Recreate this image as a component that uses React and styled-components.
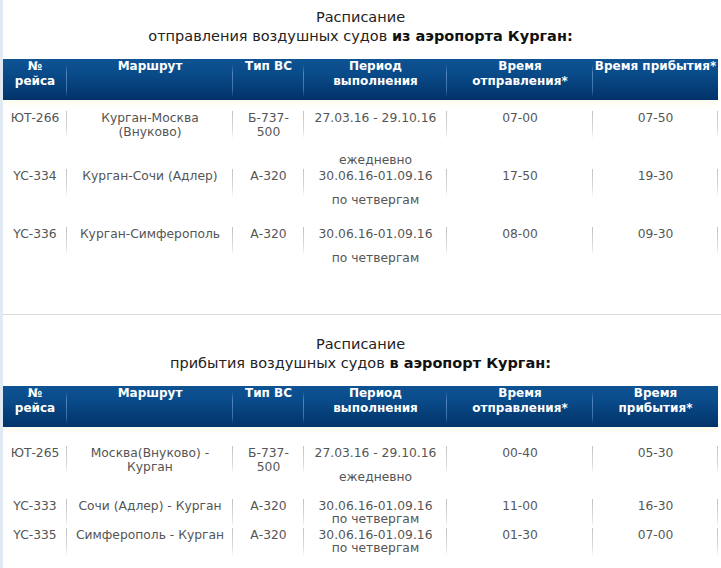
import React from 'react'
import styled, { createGlobalStyle } from 'styled-components'

const COLS = '64px 166px 71px 143px 146px 125px'

const departures = {
  lead: 'отправления воздушных судов',
  strong: 'из аэропорта Курган:',
  head: [['№', 'рейса'], ['Маршрут'], ['Тип ВС'], ['Период', 'выполнения'], ['Время', 'отправления*'], ['Время прибытия*']],
  top: 10,
  rows: [
    { height: 58, gap: 28, cells: ['ЮТ-266', ['Курган-Москва', '(Внуково)'], ['Б-737-', '500'], '27.03.16 - 29.10.16', 'ежедневно', '07-00', '07-50'] },
    { height: 58, gap: 10, cells: ['YC-334', 'Курган-Сочи (Адлер)', 'А-320', '30.06.16-01.09.16', 'по четвергам', '17-50', '19-30'] },
    { height: 58, gap: 10, cells: ['YC-336', 'Курган-Симферополь', 'А-320', '30.06.16-01.09.16', 'по четвергам', '08-00', '09-30'] }
  ]
}

const arrivals = {
  lead: 'прибытия воздушных судов',
  strong: 'в аэропорт Курган:',
  head: [['№', 'рейса'], ['Маршрут'], ['Тип ВС'], ['Период', 'выполнения'], ['Время', 'отправления*'], ['Время', 'прибытия*']],
  top: 18,
  rows: [
    { height: 53, gap: 10, cells: ['ЮТ-265', ['Москва(Внуково) -', 'Курган'], ['Б-737-', '500'], '27.03.16 - 29.10.16', 'ежедневно', '00-40', '05-30'] },
    { height: 29, gap: -1, cells: ['YC-333', 'Сочи (Адлер) - Курган', 'А-320', '30.06.16-01.09.16', 'по четвергам', '11-00', '16-30'] },
    { height: 29, gap: -1, cells: ['YC-335', 'Симферополь - Курган', 'А-320', '30.06.16-01.09.16', 'по четвергам', '01-30', '07-00'] }
  ]
}

const lines = (v) => (Array.isArray(v) ? v : [v]).map((t, i) => <Line key={i}>{t}</Line>)

const Schedule = ({ data, first }) => (
  <Section $first={first}>
    <Title>
      <div>Расписание</div>
      <div>{data.lead} <b>{data.strong}</b></div>
    </Title>
    <Head>
      {data.head.map((h, i) => <HeadCell key={i}>{lines(h)}</HeadCell>)}
    </Head>
    <Body $top={data.top}>
      {data.rows.map((r, i) => {
        const [num, route, plane, period, note, dep, arr] = r.cells
        return (
          <Row key={i} $height={r.height}>
            <Cell>{lines(num)}</Cell>
            <Cell>{lines(route)}</Cell>
            <Cell>{lines(plane)}</Cell>
            <Cell>
              <Line>{period}</Line>
              <Note $gap={r.gap}>{note}</Note>
            </Cell>
            <Cell>{lines(dep)}</Cell>
            <Cell>{lines(arr)}</Cell>
          </Row>
        )
      })}
    </Body>
  </Section>
)

export default function App () {
  return (
    <>
      <GlobalStyle />
      <Page>
        <Schedule data={departures} first />
        <Rule />
        <Schedule data={arrivals} />
      </Page>
    </>
  )
}

const GlobalStyle = createGlobalStyle`
  html, body {
    margin: 0;
    padding: 0;
    background: #fff;
  }
  body {
    font-family: 'DejaVu Sans', Verdana, sans-serif;
  }
`

const Page = styled.div`
  width: 718px;
  min-height: 568px;
  border-left: 3px solid #e1e9f2;
  overflow: hidden;
`

const Section = styled.section`
  padding-top: ${p => (p.$first ? 8 : 20)}px;
  width: 715px;
`

const Title = styled.div`
  text-align: center;
  font-size: 14.5px;
  line-height: 19px;
  color: #222;
  margin-bottom: 13px;

  b {
    color: #111;
  }
`

const Head = styled.div`
  display: grid;
  grid-template-columns: ${COLS};
  height: 41px;
  background: linear-gradient(to bottom, #0e5393 0%, #0a4b8a 35%, #053e78 70%, #02336a 100%);
`

const HeadCell = styled.div`
  text-align: center;
  color: #fff;
  font-weight: bold;
  font-size: 12px;
  line-height: 15px;
  background: linear-gradient(to bottom, rgba(90, 140, 195, 0), rgba(90, 140, 195, 0.9) 30%, rgba(90, 140, 195, 0.6) 80%, rgba(90, 140, 195, 0)) no-repeat right 5px / 1px 33px;

  &:last-child {
    background: none;
  }
`

const Body = styled.div`
  padding-top: ${p => p.$top}px;
  background: linear-gradient(to bottom, #fbfbee, #fff 8px) no-repeat;
`

const Row = styled.div`
  display: grid;
  grid-template-columns: ${COLS};
  height: ${p => p.$height}px;
`

const Cell = styled.div`
  padding-top: 1px;
  text-align: center;
  font-size: 12.3px;
  line-height: 14px;
  color: #555;
  background: linear-gradient(to bottom, #c2c2c2, #dcdcdc 70%, rgba(255, 255, 255, 0)) no-repeat right 1px / 1px 28px;
`

const Line = styled.div`
  white-space: nowrap;
`

const Note = styled.div`
  white-space: nowrap;
  margin-top: ${p => p.$gap}px;
`

const Rule = styled.div`
  height: 1px;
  margin: 30px 0 0 -3px;
  width: 721px;
  background: #dadada;
`
